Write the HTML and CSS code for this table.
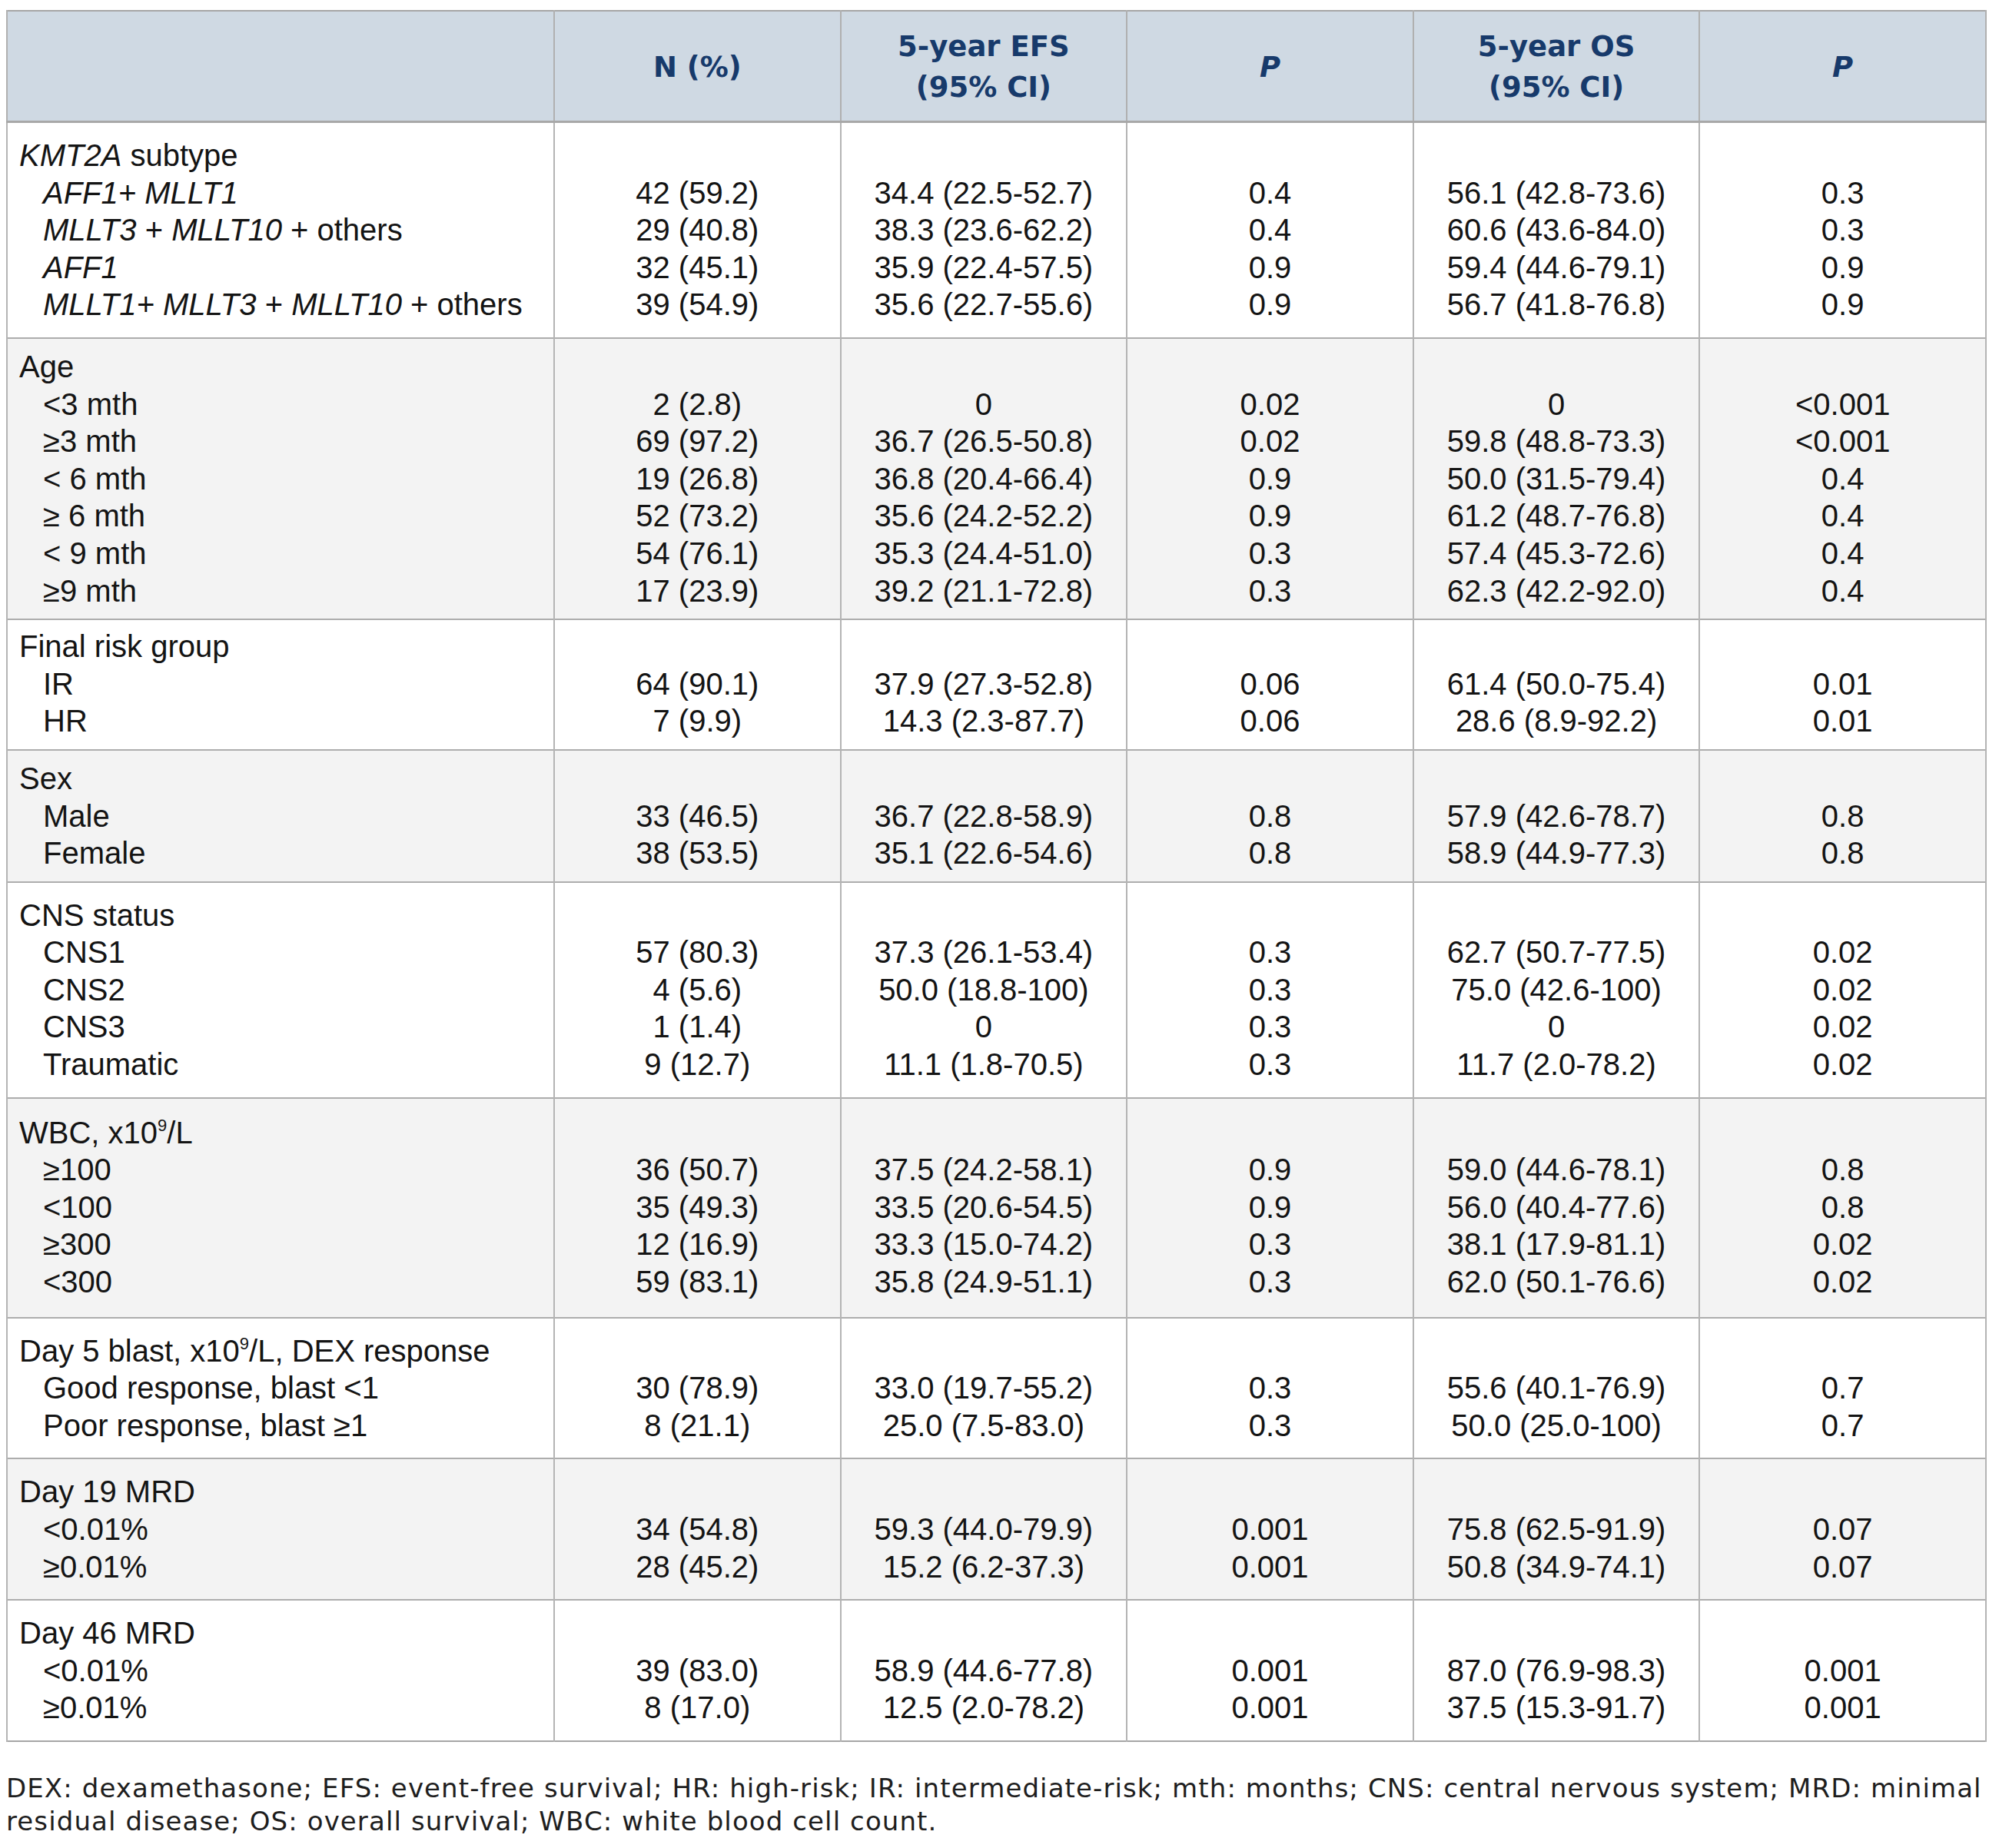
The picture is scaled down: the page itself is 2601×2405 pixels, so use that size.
FILE: index.html
```html
<!DOCTYPE html>
<html lang="en">
<head>
<meta charset="utf-8">
<title>Outcome by characteristics</title>
<link rel="stylesheet" href="styles.css">
</head>
<body>
<div class="page">
<table class="data">
<colgroup>
<col class="c-label"><col class="c-num"><col class="c-num"><col class="c-num"><col class="c-num"><col class="c-num">
</colgroup>
<thead>
<tr>
<th></th>
<th>N (%)</th>
<th>5-year EFS<br>(95% CI)</th>
<th><i>P</i></th>
<th>5-year OS<br>(95% CI)</th>
<th><i>P</i></th>
</tr>
</thead>
<tbody>
<tr class="g">
<td class="lab"><div class="ln"><i>KMT2A</i> subtype</div><div class="ln sub"><i>AFF1+ MLLT1</i></div><div class="ln sub"><i>MLLT3</i> + <i>MLLT10</i> + others</div><div class="ln sub"><i>AFF1</i></div><div class="ln sub"><i>MLLT1+ MLLT3</i> + <i>MLLT10</i> + others</div></td>
<td><div class="ln"></div><div class="ln">42 (59.2)</div><div class="ln">29 (40.8)</div><div class="ln">32 (45.1)</div><div class="ln">39 (54.9)</div></td>
<td><div class="ln"></div><div class="ln">34.4 (22.5-52.7)</div><div class="ln">38.3 (23.6-62.2)</div><div class="ln">35.9 (22.4-57.5)</div><div class="ln">35.6 (22.7-55.6)</div></td>
<td><div class="ln"></div><div class="ln">0.4</div><div class="ln">0.4</div><div class="ln">0.9</div><div class="ln">0.9</div></td>
<td><div class="ln"></div><div class="ln">56.1 (42.8-73.6)</div><div class="ln">60.6 (43.6-84.0)</div><div class="ln">59.4 (44.6-79.1)</div><div class="ln">56.7 (41.8-76.8)</div></td>
<td><div class="ln"></div><div class="ln">0.3</div><div class="ln">0.3</div><div class="ln">0.9</div><div class="ln">0.9</div></td>
</tr>
<tr class="g alt tight">
<td class="lab"><div class="ln">Age</div><div class="ln sub">&lt;3 mth</div><div class="ln sub">≥3 mth</div><div class="ln sub">&lt; 6 mth</div><div class="ln sub">≥ 6 mth</div><div class="ln sub">&lt; 9 mth</div><div class="ln sub">≥9 mth</div></td>
<td><div class="ln"></div><div class="ln">2 (2.8)</div><div class="ln">69 (97.2)</div><div class="ln">19 (26.8)</div><div class="ln">52 (73.2)</div><div class="ln">54 (76.1)</div><div class="ln">17 (23.9)</div></td>
<td><div class="ln"></div><div class="ln">0</div><div class="ln">36.7 (26.5-50.8)</div><div class="ln">36.8 (20.4-66.4)</div><div class="ln">35.6 (24.2-52.2)</div><div class="ln">35.3 (24.4-51.0)</div><div class="ln">39.2 (21.1-72.8)</div></td>
<td><div class="ln"></div><div class="ln">0.02</div><div class="ln">0.02</div><div class="ln">0.9</div><div class="ln">0.9</div><div class="ln">0.3</div><div class="ln">0.3</div></td>
<td><div class="ln"></div><div class="ln">0</div><div class="ln">59.8 (48.8-73.3)</div><div class="ln">50.0 (31.5-79.4)</div><div class="ln">61.2 (48.7-76.8)</div><div class="ln">57.4 (45.3-72.6)</div><div class="ln">62.3 (42.2-92.0)</div></td>
<td><div class="ln"></div><div class="ln">&lt;0.001</div><div class="ln">&lt;0.001</div><div class="ln">0.4</div><div class="ln">0.4</div><div class="ln">0.4</div><div class="ln">0.4</div></td>
</tr>
<tr class="g tighter">
<td class="lab"><div class="ln">Final risk group</div><div class="ln sub">IR</div><div class="ln sub">HR</div></td>
<td><div class="ln"></div><div class="ln">64 (90.1)</div><div class="ln">7 (9.9)</div></td>
<td><div class="ln"></div><div class="ln">37.9 (27.3-52.8)</div><div class="ln">14.3 (2.3-87.7)</div></td>
<td><div class="ln"></div><div class="ln">0.06</div><div class="ln">0.06</div></td>
<td><div class="ln"></div><div class="ln">61.4 (50.0-75.4)</div><div class="ln">28.6 (8.9-92.2)</div></td>
<td><div class="ln"></div><div class="ln">0.01</div><div class="ln">0.01</div></td>
</tr>
<tr class="g alt tight">
<td class="lab"><div class="ln">Sex</div><div class="ln sub">Male</div><div class="ln sub">Female</div></td>
<td><div class="ln"></div><div class="ln">33 (46.5)</div><div class="ln">38 (53.5)</div></td>
<td><div class="ln"></div><div class="ln">36.7 (22.8-58.9)</div><div class="ln">35.1 (22.6-54.6)</div></td>
<td><div class="ln"></div><div class="ln">0.8</div><div class="ln">0.8</div></td>
<td><div class="ln"></div><div class="ln">57.9 (42.6-78.7)</div><div class="ln">58.9 (44.9-77.3)</div></td>
<td><div class="ln"></div><div class="ln">0.8</div><div class="ln">0.8</div></td>
</tr>
<tr class="g">
<td class="lab"><div class="ln">CNS status</div><div class="ln sub">CNS1</div><div class="ln sub">CNS2</div><div class="ln sub">CNS3</div><div class="ln sub">Traumatic</div></td>
<td><div class="ln"></div><div class="ln">57 (80.3)</div><div class="ln">4 (5.6)</div><div class="ln">1 (1.4)</div><div class="ln">9 (12.7)</div></td>
<td><div class="ln"></div><div class="ln">37.3 (26.1-53.4)</div><div class="ln">50.0 (18.8-100)</div><div class="ln">0</div><div class="ln">11.1 (1.8-70.5)</div></td>
<td><div class="ln"></div><div class="ln">0.3</div><div class="ln">0.3</div><div class="ln">0.3</div><div class="ln">0.3</div></td>
<td><div class="ln"></div><div class="ln">62.7 (50.7-77.5)</div><div class="ln">75.0 (42.6-100)</div><div class="ln">0</div><div class="ln">11.7 (2.0-78.2)</div></td>
<td><div class="ln"></div><div class="ln">0.02</div><div class="ln">0.02</div><div class="ln">0.02</div><div class="ln">0.02</div></td>
</tr>
<tr class="g alt loose">
<td class="lab"><div class="ln">WBC, x10<sup>9</sup>/L</div><div class="ln sub">≥100</div><div class="ln sub">&lt;100</div><div class="ln sub">≥300</div><div class="ln sub">&lt;300</div></td>
<td><div class="ln"></div><div class="ln">36 (50.7)</div><div class="ln">35 (49.3)</div><div class="ln">12 (16.9)</div><div class="ln">59 (83.1)</div></td>
<td><div class="ln"></div><div class="ln">37.5 (24.2-58.1)</div><div class="ln">33.5 (20.6-54.5)</div><div class="ln">33.3 (15.0-74.2)</div><div class="ln">35.8 (24.9-51.1)</div></td>
<td><div class="ln"></div><div class="ln">0.9</div><div class="ln">0.9</div><div class="ln">0.3</div><div class="ln">0.3</div></td>
<td><div class="ln"></div><div class="ln">59.0 (44.6-78.1)</div><div class="ln">56.0 (40.4-77.6)</div><div class="ln">38.1 (17.9-81.1)</div><div class="ln">62.0 (50.1-76.6)</div></td>
<td><div class="ln"></div><div class="ln">0.8</div><div class="ln">0.8</div><div class="ln">0.02</div><div class="ln">0.02</div></td>
</tr>
<tr class="g">
<td class="lab"><div class="ln">Day 5 blast, x10<sup>9</sup>/L, DEX response</div><div class="ln sub">Good response, blast &lt;1</div><div class="ln sub">Poor response, blast ≥1</div></td>
<td><div class="ln"></div><div class="ln">30 (78.9)</div><div class="ln">8 (21.1)</div></td>
<td><div class="ln"></div><div class="ln">33.0 (19.7-55.2)</div><div class="ln">25.0 (7.5-83.0)</div></td>
<td><div class="ln"></div><div class="ln">0.3</div><div class="ln">0.3</div></td>
<td><div class="ln"></div><div class="ln">55.6 (40.1-76.9)</div><div class="ln">50.0 (25.0-100)</div></td>
<td><div class="ln"></div><div class="ln">0.7</div><div class="ln">0.7</div></td>
</tr>
<tr class="g alt">
<td class="lab"><div class="ln">Day 19 MRD</div><div class="ln sub">&lt;0.01%</div><div class="ln sub">≥0.01%</div></td>
<td><div class="ln"></div><div class="ln">34 (54.8)</div><div class="ln">28 (45.2)</div></td>
<td><div class="ln"></div><div class="ln">59.3 (44.0-79.9)</div><div class="ln">15.2 (6.2-37.3)</div></td>
<td><div class="ln"></div><div class="ln">0.001</div><div class="ln">0.001</div></td>
<td><div class="ln"></div><div class="ln">75.8 (62.5-91.9)</div><div class="ln">50.8 (34.9-74.1)</div></td>
<td><div class="ln"></div><div class="ln">0.07</div><div class="ln">0.07</div></td>
</tr>
<tr class="g">
<td class="lab"><div class="ln">Day 46 MRD</div><div class="ln sub">&lt;0.01%</div><div class="ln sub">≥0.01%</div></td>
<td><div class="ln"></div><div class="ln">39 (83.0)</div><div class="ln">8 (17.0)</div></td>
<td><div class="ln"></div><div class="ln">58.9 (44.6-77.8)</div><div class="ln">12.5 (2.0-78.2)</div></td>
<td><div class="ln"></div><div class="ln">0.001</div><div class="ln">0.001</div></td>
<td><div class="ln"></div><div class="ln">87.0 (76.9-98.3)</div><div class="ln">37.5 (15.3-91.7)</div></td>
<td><div class="ln"></div><div class="ln">0.001</div><div class="ln">0.001</div></td>
</tr>
</tbody>
</table>
<p class="note">DEX: dexamethasone; EFS: event-free survival; HR: high-risk; IR: intermediate-risk; mth: months; CNS: central nervous system; MRD: minimal residual disease; OS: overall survival; WBC: white blood cell count.</p>
</div>
</body>
</html>
```
FILE: styles.css
```css
html, body {
  margin: 0;
  padding: 0;
  background: #ffffff;
}

.page {
  padding: 13px 18px 0 8px;
}

.data {
  width: 2575px;
  border-collapse: collapse;
  table-layout: fixed;
  border: 2px solid #a6a6a6;
  font-family: "Liberation Sans", Arial, sans-serif;
  font-size: 40px;
  color: #141414;
}

.c-label { width: 712px; }
.c-num { width: 372.6px; }

.data th {
  background: #cfd9e3;
  color: #173a6b;
  font-family: "DejaVu Sans", "Noto Sans", sans-serif;
  font-weight: bold;
  font-size: 37px;
  line-height: 53px;
  padding: 19px 0 17px;
  text-align: center;
  vertical-align: middle;
  border-left: 2px solid #b0b0b0;
  border-right: 2px solid #b0b0b0;
  border-bottom: 3px solid #a8a8a8;
}

.data th i {
  font-style: italic;
}

.data td {
  vertical-align: top;
  text-align: center;
  padding: 18px 0 18px;
  border-left: 2px solid #b4b4b4;
  border-right: 2px solid #b4b4b4;
}

.data tr.g {
  border-top: 2px solid #adadad;
}

.data tr.tight td {
  padding-top: 12px;
  padding-bottom: 12px;
}

.data tr.tighter td {
  padding-top: 10px;
  padding-bottom: 12px;
}

.data tr.loose td {
  padding-top: 20px;
  padding-bottom: 21px;
}

.data tr.alt td {
  background: #f3f3f3;
}

.data td.lab {
  text-align: left;
  padding-left: 15px;
}

.ln {
  height: 48.6px;
  line-height: 48.6px;
  white-space: nowrap;
}

.ln.sub {
  padding-left: 31px;
}

sup {
  font-size: 0.55em;
  line-height: 0;
  vertical-align: 0.75em;
}

.note {
  margin: 39px 0 0 0;
  width: 2575px;
  font-family: "DejaVu Sans", "Noto Sans", sans-serif;
  font-size: 34px;
  letter-spacing: 1.1px;
  line-height: 43px;
  color: #1e1e1e;
}
```
